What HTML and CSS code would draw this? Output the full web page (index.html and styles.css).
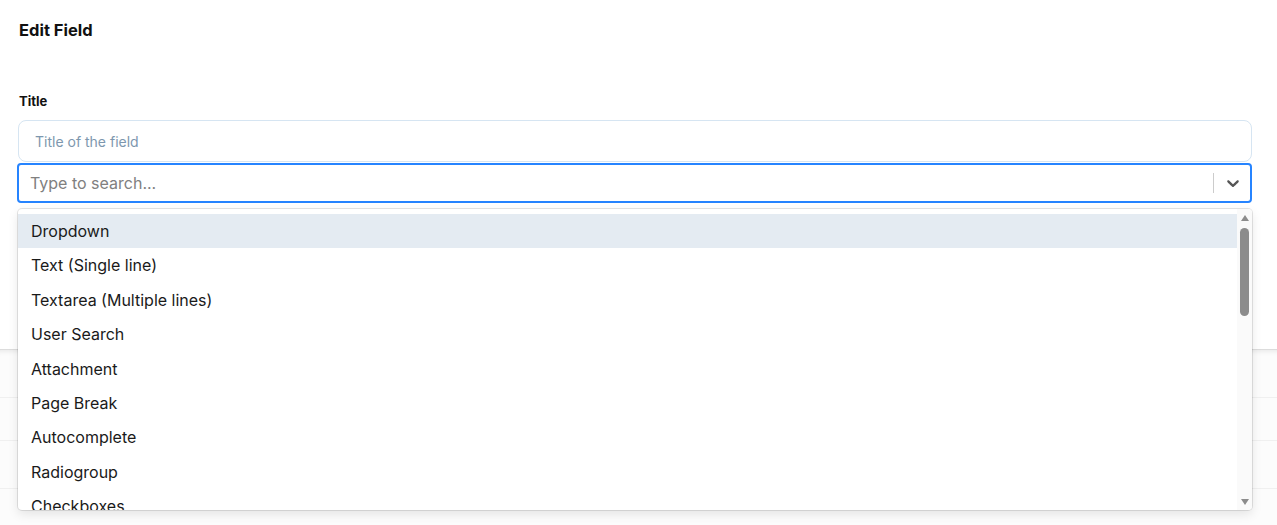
FILE: index.html
```html
<!DOCTYPE html>
<html>
<head>
  <title>Edit Field</title>
  <link rel="stylesheet" href="styles.css">
</head>
<body>
  <div class="editor">
    <h2 class="editor-title">Edit Field</h2>

    <label class="field-label" for="field-title">Title</label>
    <input class="text-input" type="text" id="field-title" placeholder="Title of the field">

    <div class="select">
      <div class="select-control">
        <input class="select-input" type="text" placeholder="Type to search...">
        <span class="select-separator"></span>
        <span class="select-indicator">
          <svg width="20" height="20" viewBox="0 0 20 20"><path d="M4.516 7.548c0.436-0.446 1.043-0.481 1.576 0l3.908 3.747 3.908-3.747c0.533-0.481 1.141-0.446 1.574 0 0.436 0.445 0.408 1.197 0 1.615-0.406 0.418-4.695 4.502-4.695 4.502-0.217 0.223-0.502 0.335-0.787 0.335s-0.57-0.112-0.789-0.335c0 0-4.287-4.084-4.695-4.502s-0.436-1.17 0-1.615z"></path></svg>
        </span>
      </div>

      <div class="select-menu">
        <div class="select-list">
          <div class="option focused">Dropdown</div>
          <div class="option">Text (Single line)</div>
          <div class="option">Textarea (Multiple lines)</div>
          <div class="option">User Search</div>
          <div class="option">Attachment</div>
          <div class="option">Page Break</div>
          <div class="option">Autocomplete</div>
          <div class="option">Radiogroup</div>
          <div class="option">Checkboxes</div>
        </div>
        <div class="scrollbar">
          <span class="scroll-up"></span>
          <span class="scroll-thumb"></span>
          <span class="scroll-down"></span>
        </div>
      </div>
    </div>
  </div>

  <div class="fields-table">
    <div class="fields-row"></div>
    <div class="fields-row short"></div>
    <div class="fields-row"></div>
  </div>
</body>
</html>
```

FILE: styles.css
```css
body {
  font-family: Inter, "Noto Sans", Arial, sans-serif;
  margin: 0;
  background-color: #fff;
  color: #222;
}

.editor {
  height: 349px;
  padding: 20px 25px 0 18px;
  box-sizing: border-box;
}

.editor-title {
  margin: 0 0 0 1px;
  font-size: 16.5px;
  line-height: 20px;
  font-weight: 700;
  color: #111;
}

.field-label {
  display: block;
  margin: 53px 0 11px 1px;
  font-size: 13px;
  line-height: 16px;
  font-weight: 700;
  color: #111;
}

.text-input {
  display: block;
  width: 100%;
  height: 42px;
  box-sizing: border-box;
  padding: 0 16px;
  border: 1px solid #d6e5f2;
  border-radius: 8px;
  font-family: inherit;
  font-size: 14px;
  outline: none;
}

.text-input::placeholder {
  color: #7d97ae;
}

.select {
  position: relative;
  margin-top: 1px;
  margin-left: -1px;
}

.select-control {
  display: flex;
  align-items: center;
  height: 40px;
  box-sizing: border-box;
  border: 2px solid #2684ff;
  border-radius: 4px;
  background-color: #fff;
}

.select-input {
  flex: 1;
  min-width: 0;
  border: none;
  outline: none;
  padding: 0 0 0 11px;
  font-family: inherit;
  font-size: 16px;
  color: #222;
  background: transparent;
}

.select-input::placeholder {
  color: #808080;
}

.select-separator {
  width: 1px;
  height: 20px;
  background-color: #ccc;
}

.select-indicator {
  display: flex;
  padding: 8px 7px 8px 9px;
  fill: #555;
}

/* menu lies over the page below */
.select-menu {
  position: absolute;
  top: 46px;
  left: 1px;
  right: 0;
  z-index: 2;
  display: flex;
  height: 301px;
  background-color: #fff;
  border-radius: 4px;
  box-shadow: 0 0 0 1px rgba(0, 0, 0, 0.1), 0 4px 11px rgba(0, 0, 0, 0.1);
  overflow: hidden;
}

.select-list {
  flex: 1;
  overflow: hidden;
  padding-top: 5px;
}

.option {
  padding: 8px 13px;
  font-size: 16px;
  line-height: 18.4px;
  color: #1a1a1a;
}

.option.focused {
  background-color: #e4ebf2;
}

.scrollbar {
  width: 15px;
  display: flex;
  flex-direction: column;
  align-items: center;
  background-color: #fafafa;
}

.scroll-up {
  margin-top: 6px;
  border-left: 4.5px solid transparent;
  border-right: 4.5px solid transparent;
  border-bottom: 6px solid #8c8c8c;
}

.scroll-thumb {
  width: 9px;
  height: 88px;
  margin-top: 7px;
  border-radius: 5px;
  background-color: #8c8c8c;
}

.scroll-down {
  margin-top: auto;
  margin-bottom: 5px;
  border-left: 4.5px solid transparent;
  border-right: 4.5px solid transparent;
  border-top: 6px solid #8c8c8c;
}

.fields-table {
  border-top: 1px solid #dcdcdc;
  box-shadow: inset 0 6px 6px -6px rgba(0, 0, 0, 0.12);
  background-color: #fcfcfc;
  height: 175px;
}

.fields-row {
  height: 47px;
  border-bottom: 1px solid #f0f0f0;
}

.fields-row.short {
  height: 42px;
}
```
